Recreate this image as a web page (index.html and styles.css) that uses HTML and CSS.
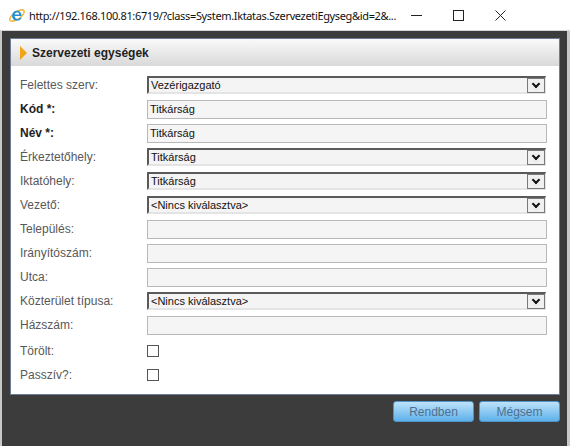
FILE: index.html
```html
<!DOCTYPE html>
<html>
<head>
<meta charset="utf-8">
<link rel="stylesheet" href="styles.css">
</head>
<body>
<div class="win">
  <div class="titlebar">
    <svg class="ie" width="18" height="18" viewBox="0 0 18 18">
      <ellipse cx="9" cy="9.5" rx="8.5" ry="3.6" transform="rotate(-35 9 9.5)" fill="none" stroke="#f2b233" stroke-width="1.4"/>
      <path d="M4.2 10.2 C4.2 6.8 6.3 4.8 9 4.8 C11.8 4.8 13.6 6.8 13.6 9.9 L6.6 9.9 C6.8 11.8 8 12.9 9.6 12.9 C10.8 12.9 11.7 12.3 12.3 11.4 L13.5 12.3 C12.5 13.8 11.1 14.6 9.4 14.6 C6.4 14.6 4.2 12.8 4.2 10.2 Z M6.7 8.6 L11.3 8.6 C11.1 7.1 10.2 6.3 9 6.3 C7.8 6.3 6.9 7.2 6.7 8.6 Z" fill="#1e8fd8"/>
    </svg>
    <span class="url">http://192.168.100.81:6719/?class=System.Iktatas.SzervezetiEgyseg&amp;id=2&amp;...</span>
    <div class="controls">
      <svg width="11" height="11" viewBox="0 0 11 11"><path d="M0 5.5 H11" stroke="#222" stroke-width="1"/></svg>
      <svg width="11" height="11" viewBox="0 0 11 11"><rect x="0.5" y="0.5" width="10" height="10" fill="none" stroke="#222" stroke-width="1"/></svg>
      <svg width="11" height="11" viewBox="0 0 11 11"><path d="M0.5 0.5 L10.5 10.5 M10.5 0.5 L0.5 10.5" stroke="#222" stroke-width="1"/></svg>
    </div>
  </div>
  <div class="content">
    <div class="panel">
      <div class="panel-head"><span class="tri"></span><span class="head-title">Szervezeti egységek</span></div>
      <div class="form">
        <div class="row"><label class="lbl">Felettes szerv:</label><div class="select"><span>Vezérigazgató</span><span class="dd"></span></div></div>
        <div class="row"><label class="lbl bold">Kód *:</label><div class="input"><span>Titkárság</span></div></div>
        <div class="row"><label class="lbl bold">Név *:</label><div class="input"><span>Titkárság</span></div></div>
        <div class="row"><label class="lbl">Érkeztetőhely:</label><div class="select"><span>Titkárság</span><span class="dd"></span></div></div>
        <div class="row"><label class="lbl">Iktatóhely:</label><div class="select"><span>Titkárság</span><span class="dd"></span></div></div>
        <div class="row"><label class="lbl">Vezető:</label><div class="select"><span>&lt;Nincs kiválasztva&gt;</span><span class="dd"></span></div></div>
        <div class="row"><label class="lbl">Település:</label><div class="input"></div></div>
        <div class="row"><label class="lbl">Irányítószám:</label><div class="input"></div></div>
        <div class="row"><label class="lbl">Utca:</label><div class="input"></div></div>
        <div class="row"><label class="lbl">Közterület típusa:</label><div class="select"><span>&lt;Nincs kiválasztva&gt;</span><span class="dd"></span></div></div>
        <div class="row"><label class="lbl">Házszám:</label><div class="input"></div></div>
        <div class="row first-check"><label class="lbl">Törölt:</label><span class="check"></span></div>
        <div class="row"><label class="lbl">Passzív?:</label><span class="check"></span></div>
      </div>
    </div>
    <div class="buttons">
      <button class="btn">Rendben</button>
      <button class="btn">Mégsem</button>
    </div>
  </div>
</div>
</body>
</html>
```

FILE: styles.css
```css
html, body {
  margin: 0;
  padding: 0;
}
body {
  width: 570px;
  height: 446px;
  overflow: hidden;
  font-family: "Liberation Sans", Arial, sans-serif;
}
.win {
  width: 570px;
  height: 446px;
  box-sizing: border-box;
  border-left: 2px solid #c8c8c8;
  border-right: 3px solid #c8c8c8;
  background: #3c3c3c;
  display: flex;
  flex-direction: column;
}
.titlebar {
  height: 31px;
  background: #fff;
  display: flex;
  align-items: center;
  margin: 0 -3px 0 -2px;
  padding-left: 8px;
  padding-right: 64px;
  box-sizing: border-box;
  border-bottom: 1px solid #d6d6d6;
}
.ie {
  flex: none;
}
.url {
  margin-left: 3px;
  font-family: "Noto Sans", "Open Sans", sans-serif;
  font-size: 11px;
  color: #111;
  white-space: nowrap;
  letter-spacing: -0.35px;
}
.controls {
  display: flex;
  gap: 31px;
  margin-left: auto;
}
.controls svg {
  display: block;
}
.content {
  flex: 1;
  padding: 7px 7px 0 8px;
  display: flex;
  flex-direction: column;
}
.panel {
  background: #fff;
  border: 1px solid #6e7c98;
  height: 357px;
  box-sizing: border-box;
}
.panel-head {
  height: 27px;
  background: linear-gradient(#fafafa, #d9d9d9);
  display: flex;
  align-items: center;
  padding-left: 9px;
}
.tri {
  width: 0;
  height: 0;
  border-top: 7px solid transparent;
  border-bottom: 7px solid transparent;
  border-left: 7px solid #f0a418;
  margin-top: 1px;
}
.head-title {
  margin-left: 5px;
  font-weight: bold;
  font-size: 12px;
  color: #222;
}
.form {
  padding: 7px 0 0 9px;
  display: flex;
  flex-direction: column;
}
.row {
  height: 24px;
  display: flex;
  align-items: center;
}
.first-check {
  margin-top: 2px;
}
.lbl {
  width: 127px;
  flex: none;
  font-size: 12px;
  color: #585858;
}
.lbl.bold {
  font-weight: bold;
  color: #1e1e1e;
}
.input {
  width: 400px;
  height: 19px;
  box-sizing: border-box;
  border: 1px solid #b8b8b8;
  background: #f5f5f5;
  font-size: 11px;
  color: #111;
  display: flex;
  align-items: center;
  padding-left: 2px;
}
.select {
  width: 399px;
  height: 18px;
  box-sizing: border-box;
  border-top: 2px solid #5a5a5a;
  border-left: 2px solid #5a5a5a;
  border-right: 1px solid #e4e4e4;
  border-bottom: 2px solid #e4e4e4;
  background: #f4f4f4;
  font-size: 11px;
  color: #111;
  display: flex;
  align-items: center;
  justify-content: space-between;
  padding-left: 2px;
}
.dd {
  width: 18px;
  height: 15px;
  box-sizing: border-box;
  border: 1px solid #7a7a7a;
  background: #f0f0f0;
  position: relative;
}
.dd::after {
  content: "";
  position: absolute;
  left: 5px;
  top: 2px;
  width: 4px;
  height: 4px;
  border-right: 2px solid #111;
  border-bottom: 2px solid #111;
  transform: rotate(45deg);
}
.check {
  width: 12px;
  height: 12px;
  box-sizing: border-box;
  border: 1px solid #555;
  background: #fff;
}
.buttons {
  display: flex;
  justify-content: flex-end;
  gap: 5px;
  margin-top: 6px;
}
.btn {
  width: 81px;
  height: 21px;
  border: 1px solid #4f95c8;
  border-radius: 3px;
  background: linear-gradient(#bfe2fa, #8ccaf3 50%, #5eb0ea);
  color: #4e6f90;
  font-family: "Liberation Sans", Arial, sans-serif;
  font-size: 12px;
  padding: 0;
}
```
